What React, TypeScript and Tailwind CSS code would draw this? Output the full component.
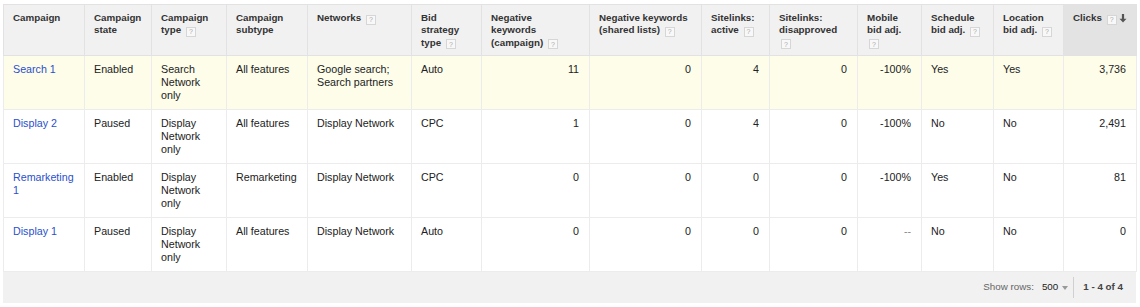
import type { ReactNode } from "react";

type Row = {
  name: string;
  state: string;
  type: string;
  subtype: string;
  networks: string;
  bid: string;
  negCampaign: string;
  negShared: string;
  siteActive: string;
  siteDisapproved: string;
  mobile: string;
  schedule: string;
  location: string;
  clicks: string;
};

const rows: Row[] = [
  { name: "Search 1", state: "Enabled", type: "Search Network only", subtype: "All features", networks: "Google search; Search partners", bid: "Auto", negCampaign: "11", negShared: "0", siteActive: "4", siteDisapproved: "0", mobile: "-100%", schedule: "Yes", location: "Yes", clicks: "3,736" },
  { name: "Display 2", state: "Paused", type: "Display Network only", subtype: "All features", networks: "Display Network", bid: "CPC", negCampaign: "1", negShared: "0", siteActive: "4", siteDisapproved: "0", mobile: "-100%", schedule: "No", location: "No", clicks: "2,491" },
  { name: "Remarketing 1", state: "Enabled", type: "Display Network only", subtype: "Remarketing", networks: "Display Network", bid: "CPC", negCampaign: "0", negShared: "0", siteActive: "0", siteDisapproved: "0", mobile: "-100%", schedule: "Yes", location: "No", clicks: "81" },
  { name: "Display 1", state: "Paused", type: "Display Network only", subtype: "All features", networks: "Display Network", bid: "Auto", negCampaign: "0", negShared: "0", siteActive: "0", siteDisapproved: "0", mobile: "--", schedule: "No", location: "No", clicks: "0" },
];

const widths = [81, 67, 75, 81, 104, 70, 108, 112, 68, 88, 64, 72, 70, 73];

function Help() {
  return (
    <span className="ml-[2px] inline-flex h-[10px] w-[10px] items-center justify-center border border-[#d6d6d6] bg-[#f8f8f8] align-[-1px] text-[7px] font-normal leading-[7px] text-[#aaa]">
      ?
    </span>
  );
}

function Th({ children, dark }: { children: ReactNode; dark?: boolean }) {
  return (
    <th
      className={`border border-[#e2e2e2] px-[9px] pt-[7px] pb-0 text-left align-top text-[9.8px] font-bold leading-[12.3px] text-[#333] ${
        dark ? "bg-[#e3e3e3]" : "bg-[#f1f1f1]"
      }`}
    >
      {children}
    </th>
  );
}

function Td({ children, right, className = "" }: { children: ReactNode; right?: boolean; className?: string }) {
  return (
    <td
      className={`border border-[#ececec] px-[9px] pt-[7px] pb-0 align-top text-[10.7px] leading-[13px] text-[#222] ${
        right ? "pr-[10px] text-right" : "text-left"
      } ${className}`}
    >
      {children}
    </td>
  );
}

export default function App() {
  return (
    <div className="h-[307px] w-[1140px] bg-white pt-[4px] pl-[3px]" style={{ fontFamily: '"Liberation Sans", Arial, sans-serif' }}>
      <div className="w-[1133px]">
        <table className="w-[1133px] table-fixed border-collapse">
          <colgroup>
            {widths.map((w, i) => (
              <col key={i} style={{ width: w }} />
            ))}
          </colgroup>
          <thead>
            <tr className="h-[51px]">
              <Th>Campaign</Th>
              <Th>Campaign state</Th>
              <Th>
                Campaign type <Help />
              </Th>
              <Th>Campaign subtype</Th>
              <Th>
                Networks <Help />
              </Th>
              <Th>
                Bid strategy type <Help />
              </Th>
              <Th>
                Negative
                <br />
                keywords
                <br />
                (campaign) <Help />
              </Th>
              <Th>
                Negative keywords (shared lists) <Help />
              </Th>
              <Th>
                Sitelinks: active <Help />
              </Th>
              <Th>
                Sitelinks: disapproved <Help />
              </Th>
              <Th>
                Mobile bid adj. <Help />
              </Th>
              <Th>
                Schedule bid adj. <Help />
              </Th>
              <Th>
                Location bid adj. <Help />
              </Th>
              <Th dark>
                <span className="flex items-start">
                  <span>
                    Clicks <Help />
                  </span>
                  <svg className="ml-auto mt-[2px]" width="8" height="9" viewBox="0 0 8 9">
                    <path d="M2.9 0h2.2v4.8h2.4L4 8.6 0.5 4.8h2.4z" fill="#555" />
                  </svg>
                </span>
              </Th>
            </tr>
          </thead>
          <tbody>
            {rows.map((r, i) => (
              <tr key={r.name} className={`h-[54px] ${i === 0 ? "bg-[#fdfdea]" : "bg-white"}`}>
                <Td>
                  <a className="text-[#2a4fcc]">{r.name}</a>
                </Td>
                <Td>{r.state}</Td>
                <Td>{r.type}</Td>
                <Td>{r.subtype}</Td>
                <Td>{r.networks}</Td>
                <Td>{r.bid}</Td>
                <Td right>{r.negCampaign}</Td>
                <Td right>{r.negShared}</Td>
                <Td right>{r.siteActive}</Td>
                <Td right>{r.siteDisapproved}</Td>
                <Td right className={r.mobile === "--" ? "text-[#888]" : ""}>
                  {r.mobile}
                </Td>
                <Td>{r.schedule}</Td>
                <Td>{r.location}</Td>
                <Td right>{r.clicks}</Td>
              </tr>
            ))}
          </tbody>
        </table>
        <div className="flex h-[31px] items-center justify-end bg-[#f1f1f1] pr-[13px] text-[9.8px]">
          <span className="text-[#666]">Show rows:</span>
          <span className="ml-[8px] text-[#222]">500</span>
          <svg className="ml-[4px] mt-[1px]" width="6" height="4" viewBox="0 0 6 4">
            <path d="M0 0h6L3 4z" fill="#999" />
          </svg>
          <span className="ml-[5px] mr-[9px] h-[21px] w-px bg-[#d0d0d0]" />
          <span className="font-bold text-[#444]">1 - 4 of 4</span>
        </div>
      </div>
    </div>
  );
}
